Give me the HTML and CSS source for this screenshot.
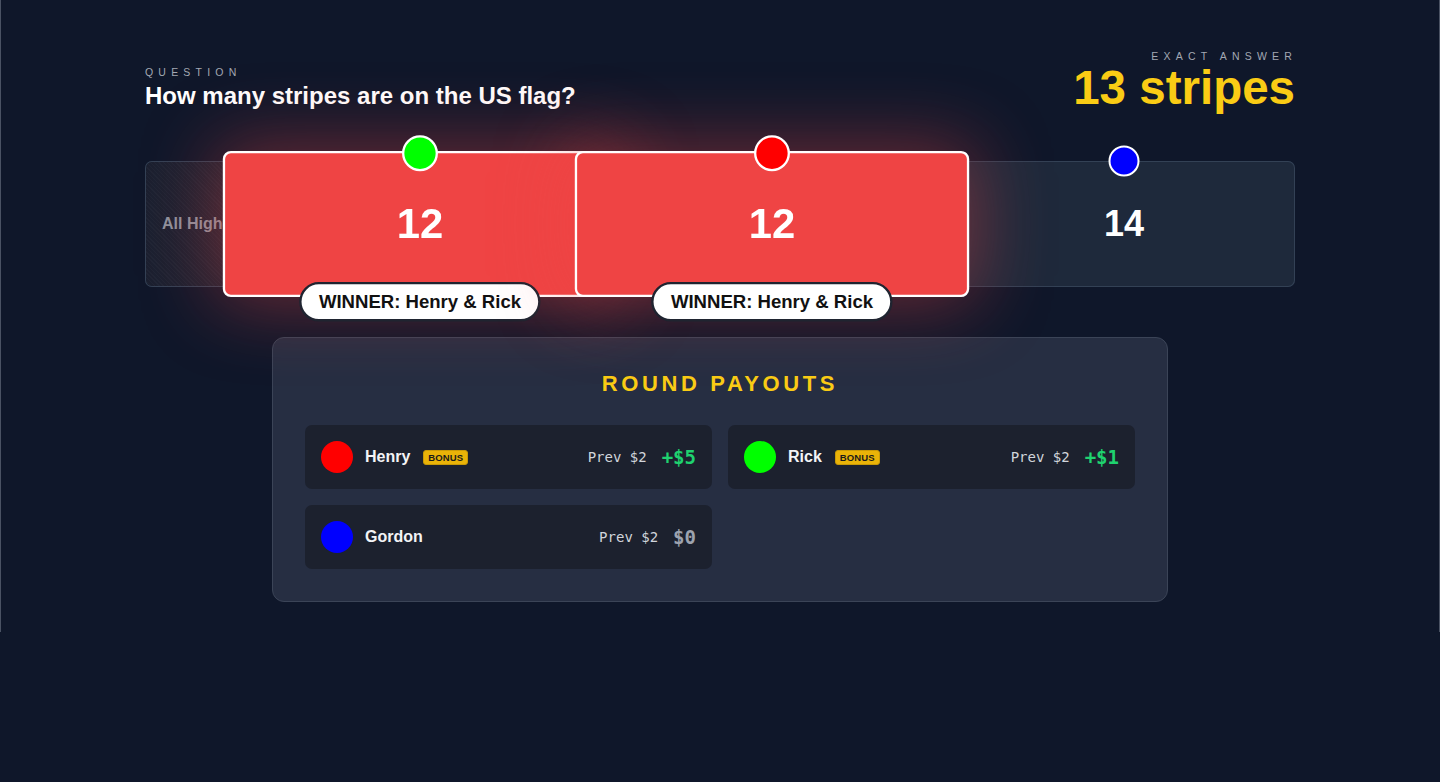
FILE: index.html
```html
<!DOCTYPE html>
<html lang="en">
<head>
<meta charset="utf-8">
<title>Round Results</title>
<link rel="stylesheet" href="styles.css">
</head>
<body>
<div class="stage">
  <div class="content">
    <header class="head">
      <div class="q-block">
        <div class="label">QUESTION</div>
        <h1 class="question">How many stripes are on the US flag?</h1>
      </div>
      <div class="a-block">
        <div class="label label-right">EXACT ANSWER</div>
        <div class="answer">13 stripes</div>
      </div>
    </header>

    <div class="track">
      <div class="seg seg-edge"><span class="edge-text">All Higher</span></div>
      <div class="seg seg-win">
        <span class="dot dot-green"></span>
        <span class="val">12</span>
        <span class="winner">WINNER: Henry &amp; Rick</span>
      </div>
      <div class="seg seg-win">
        <span class="dot dot-red"></span>
        <span class="val">12</span>
        <span class="winner">WINNER: Henry &amp; Rick</span>
      </div>
      <div class="seg seg-plain">
        <span class="dot dot-blue"></span>
        <span class="val">14</span>
      </div>
    </div>

    <section class="payouts">
      <h2 class="payouts-title">ROUND PAYOUTS</h2>
      <div class="payout-grid">
        <div class="prow">
          <span class="avatar av-red"></span>
          <span class="pname">Henry</span>
          <span class="badge">BONUS</span>
          <span class="prev">Prev $2</span>
          <span class="amt amt-pos">+$5</span>
        </div>
        <div class="prow">
          <span class="avatar av-green"></span>
          <span class="pname">Rick</span>
          <span class="badge">BONUS</span>
          <span class="prev">Prev $2</span>
          <span class="amt amt-pos">+$1</span>
        </div>
        <div class="prow">
          <span class="avatar av-blue"></span>
          <span class="pname">Gordon</span>
          <span class="prev">Prev $2</span>
          <span class="amt amt-zero">$0</span>
        </div>
      </div>
    </section>
  </div>
</div>
</body>
</html>
```

FILE: styles.css
```css
html, body {
  margin: 0;
  padding: 0;
  background: #0f172a;
  font-family: "Liberation Sans", Arial, sans-serif;
  color: #fff;
}

.stage {
  height: 632px;
  box-sizing: border-box;
  border-left: 1px solid #4a5263;
  border-right: 1px solid #4a5263;
  padding-top: 48px;
}

.content {
  width: 1150px;
  margin: 0 auto;
}

/* header */
.head {
  display: flex;
  justify-content: space-between;
  align-items: flex-end;
}

.label {
  font-size: 10.5px;
  line-height: 16px;
  letter-spacing: 5.2px;
  color: #a3a8b3;
}

.label-right {
  text-align: right;
  margin-right: -2px;
}

.question {
  margin: 0;
  font-size: 24px;
  line-height: 32px;
  font-weight: 700;
  color: #fff;
}

.answer {
  font-size: 47.5px;
  line-height: 48px;
  font-weight: 700;
  color: #facc15;
  text-align: right;
}

/* track */
.track {
  margin-top: 49px;
  height: 126px;
  box-sizing: border-box;
  display: flex;
  gap: 12px;
  padding: 0 1px;
  background: #1e293b;
  border-radius: 7px;
  box-shadow: inset 0 0 0 1px #334155;
}

.seg {
  position: relative;
  flex: 0 0 340px;
  height: 126px;
  box-sizing: border-box;
  display: flex;
  align-items: center;
  justify-content: center;
}

.seg-edge {
  flex: 0 0 92px;
  justify-content: flex-start;
  padding-left: 16px;
  overflow: hidden;
  height: 124px;
  margin-top: 1px;
  border-radius: 6px 0 0 6px;
  background:
    repeating-linear-gradient(45deg, rgba(255,255,255,0.025) 0 1px, transparent 1px 3px),
    #1a2030;
}

.edge-text {
  white-space: nowrap;
  font-size: 16px;
  font-weight: 700;
  color: #8d939e;
}

.seg-win {
  background: #ef4444;
  border: 2px solid #fff;
  border-radius: 7px;
  transform: scale(1.16);
  z-index: 1;
  box-shadow: 0 0 64px 6px rgba(239, 68, 68, 0.42);
}

.val {
  font-size: 36px;
  line-height: 40px;
  font-weight: 700;
  color: #fff;
}

.dot {
  position: absolute;
  top: 0;
  left: 50%;
  width: 27px;
  height: 27px;
  border: 2px solid #fff;
  border-radius: 50%;
  transform: translate(-50%, -50%);
}

.dot-green { background: #00ff00; }
.dot-red { background: #ff0000; }
.dot-blue { background: #0000ff; }

.winner {
  position: absolute;
  left: 50%;
  bottom: -23px;
  transform: translateX(-50%);
  white-space: nowrap;
  background: #fff;
  color: #111;
  border: 2px solid #1f2430;
  border-radius: 999px;
  padding: 5px 15px;
  font-size: 16px;
  line-height: 20px;
  font-weight: 700;
}

/* payouts */
.payouts {
  width: 896px;
  box-sizing: border-box;
  margin: 50px auto 0;
  padding: 32px;
  background: #262e42;
  border: 1px solid #3b4457;
  border-radius: 12px;
}

.payouts-title {
  margin: 0 0 27px;
  text-align: center;
  font-size: 22px;
  line-height: 28px;
  font-weight: 700;
  letter-spacing: 3.6px;
  color: #facc15;
}

.payout-grid {
  display: grid;
  grid-template-columns: 1fr 1fr;
  gap: 16px;
}

.prow {
  display: flex;
  align-items: center;
  height: 64px;
  box-sizing: border-box;
  padding: 0 16px;
  background: #1c212e;
  border-radius: 7px;
}

.avatar {
  width: 32px;
  height: 32px;
  border-radius: 50%;
  margin-right: 12px;
  flex: none;
}

.av-red { background: #ff0000; }
.av-green { background: #00ff00; }
.av-blue { background: #0000ff; }

.pname {
  font-size: 16px;
  font-weight: 700;
  color: #f3f4f6;
}

.badge {
  margin-left: 13px;
  font-size: 9.5px;
  line-height: 11px;
  font-weight: 700;
  letter-spacing: 0.1px;
  color: #1a1a1a;
  background: #eab308;
  border: 1px solid #c99a06;
  border-radius: 3px;
  padding: 1px 4px;
}

.prev {
  margin-left: auto;
  font-family: "DejaVu Sans Mono", "Liberation Mono", monospace;
  font-size: 14px;
  color: #d1d5db;
}

.amt {
  margin-left: 15px;
  font-family: "DejaVu Sans Mono", "Liberation Mono", monospace;
  font-size: 19px;
  font-weight: 700;
}

.amt-pos { color: #1fd26f; }
.amt-zero { color: #9ca3af; }
```
